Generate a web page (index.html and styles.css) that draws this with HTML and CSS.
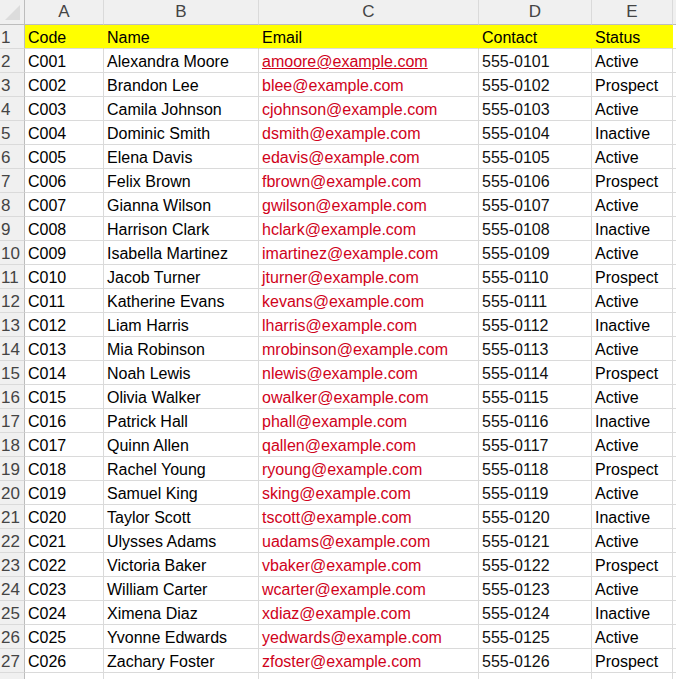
FILE: index.html
```html
<!DOCTYPE html>
<html>
<head>
<meta charset="utf-8">
<link rel="stylesheet" href="styles.css">
</head>
<body>
<div class="frame">
<div class="sheet" id="sheet">
  <div class="corner"><span class="tri"></span></div>
  <div class="colhead">A</div>
  <div class="colhead">B</div>
  <div class="colhead">C</div>
  <div class="colhead">D</div>
  <div class="colhead">E</div>
  <div class="colhead last"></div>

  <div class="rowhead">1</div>
  <div class="cell hdr">Code</div>
  <div class="cell hdr">Name</div>
  <div class="cell hdr">Email</div>
  <div class="cell hdr">Contact</div>
  <div class="cell hdr">Status</div>
  <div class="cell last"></div>
</div>
</div>
<script src="app.js"></script>
</body>
</html>
```
FILE: app.js
```js
var rows = [
  ["C001","Alexandra Moore","amoore@example.com","555-0101","Active"],
  ["C002","Brandon Lee","blee@example.com","555-0102","Prospect"],
  ["C003","Camila Johnson","cjohnson@example.com","555-0103","Active"],
  ["C004","Dominic Smith","dsmith@example.com","555-0104","Inactive"],
  ["C005","Elena Davis","edavis@example.com","555-0105","Active"],
  ["C006","Felix Brown","fbrown@example.com","555-0106","Prospect"],
  ["C007","Gianna Wilson","gwilson@example.com","555-0107","Active"],
  ["C008","Harrison Clark","hclark@example.com","555-0108","Inactive"],
  ["C009","Isabella Martinez","imartinez@example.com","555-0109","Active"],
  ["C010","Jacob Turner","jturner@example.com","555-0110","Prospect"],
  ["C011","Katherine Evans","kevans@example.com","555-0111","Active"],
  ["C012","Liam Harris","lharris@example.com","555-0112","Inactive"],
  ["C013","Mia Robinson","mrobinson@example.com","555-0113","Active"],
  ["C014","Noah Lewis","nlewis@example.com","555-0114","Prospect"],
  ["C015","Olivia Walker","owalker@example.com","555-0115","Active"],
  ["C016","Patrick Hall","phall@example.com","555-0116","Inactive"],
  ["C017","Quinn Allen","qallen@example.com","555-0117","Active"],
  ["C018","Rachel Young","ryoung@example.com","555-0118","Prospect"],
  ["C019","Samuel King","sking@example.com","555-0119","Active"],
  ["C020","Taylor Scott","tscott@example.com","555-0120","Inactive"],
  ["C021","Ulysses Adams","uadams@example.com","555-0121","Active"],
  ["C022","Victoria Baker","vbaker@example.com","555-0122","Prospect"],
  ["C023","William Carter","wcarter@example.com","555-0123","Active"],
  ["C024","Ximena Diaz","xdiaz@example.com","555-0124","Inactive"],
  ["C025","Yvonne Edwards","yedwards@example.com","555-0125","Active"],
  ["C026","Zachary Foster","zfoster@example.com","555-0126","Prospect"]
];
var sheet = document.getElementById("sheet");
function add(cls, text) {
  var d = document.createElement("div");
  d.className = cls;
  d.textContent = text;
  sheet.appendChild(d);
}
rows.forEach(function (r, i) {
  add("rowhead", String(i + 2));
  add("cell", r[0]);
  add("cell", r[1]);
  add(i === 0 ? "cell email link" : "cell email", r[2]);
  add("cell contact", r[3]);
  add("cell", r[4]);
  add("cell last", "");
});
add("rowhead", "");
for (var k = 0; k < 6; k++) add(k === 5 ? "cell last" : "cell", "");
```
FILE: styles.css
```css
html, body {
  margin: 0;
  padding: 0;
  background: #ffffff;
  overflow: hidden;
}
.frame {
  width: 676px;
  height: 679px;
  overflow: hidden;
}
.sheet {
  display: grid;
  grid-template-columns: 25px 79px 155px 220px 113px 81px 30px;
  grid-auto-rows: 24px;
  grid-template-rows: 25px;
  font-family: "Liberation Sans", Arial, sans-serif;
  font-size: 16px;
  width: 703px;
}
.corner {
  background: #f0f0f0;
  border-right: 1px solid #bdbdbd;
  border-bottom: 1px solid #bdbdbd;
  position: relative;
}
.tri {
  position: absolute;
  right: 4px;
  bottom: 4px;
  width: 0;
  height: 0;
  border-left: 15px solid transparent;
  border-bottom: 15px solid #dcdcdc;
}
.colhead {
  background: #f0f0f0;
  color: #444444;
  font-size: 17px;
  text-align: center;
  line-height: 24px;
  border-right: 1px solid #dadada;
  border-bottom: 1px solid #bdbdbd;
}
.rowhead {
  background: #f0f0f0;
  color: #444444;
  font-size: 17px;
  line-height: 21px;
  padding-top: 2px;
  box-sizing: border-box;
  padding-left: 1px;
  border-right: 1px solid #bdbdbd;
  border-bottom: 1px solid #dadada;
  overflow: hidden;
  white-space: nowrap;
}
.cell {
  color: #000000;
  line-height: 21px;
  padding-top: 2px;
  box-sizing: border-box;
  padding-left: 3px;
  border-right: 1px solid #dadada;
  border-bottom: 1px solid #dadada;
  white-space: nowrap;
  overflow: hidden;
}
.hdr {
  background: #ffff00;
  border-right-color: #ffff00;
  border-bottom-color: #dadada;
}
.email {
  color: #d0021b;
}
.link {
  text-decoration: underline;
}
.contact {
  color: #111111;
}
```
